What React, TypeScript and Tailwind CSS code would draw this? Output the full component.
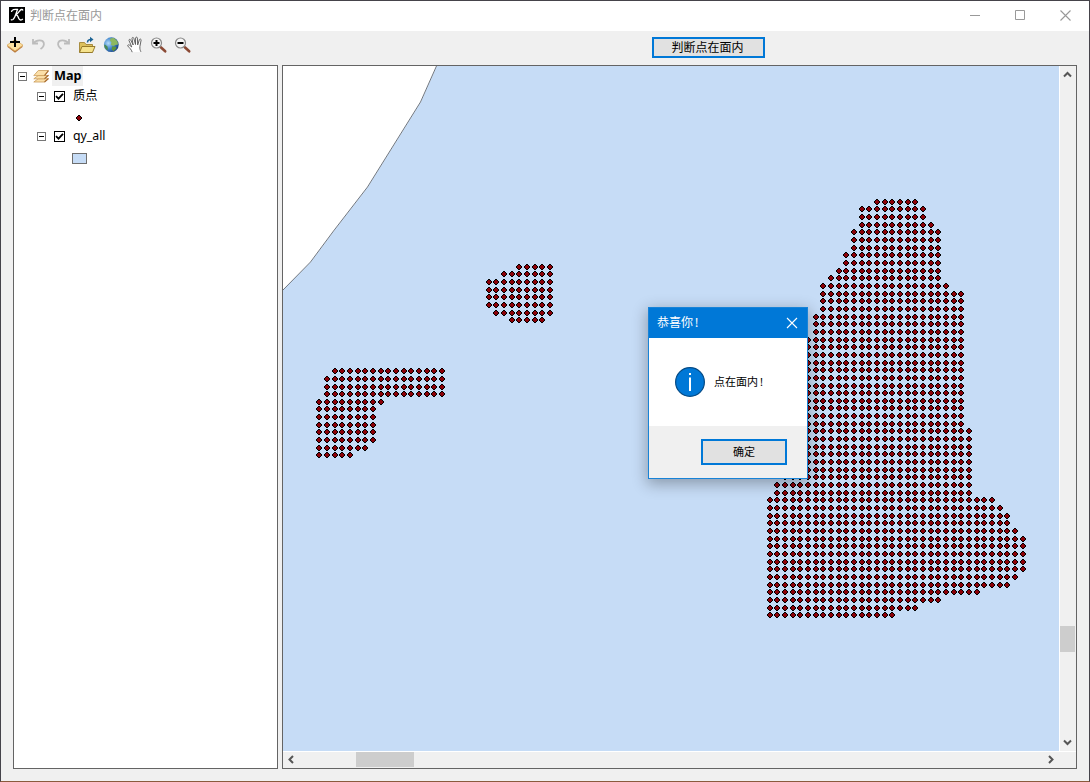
import type { ReactNode } from 'react';

type Span = [row: number, from: number, to: number];

const island: Span[] = [
  [0, 4, 8], [1, 2, 8], [2, 0, 8], [3, 0, 8], [4, 0, 8], [5, 0, 8], [6, 1, 8], [7, 3, 7],
];
const islandX = [489, 496, 504, 512, 519, 527, 535, 542, 550];
const islandY = [267, 274, 282, 290, 297, 305, 313, 320];

const hook: Span[] = [
  [0, 2, 16], [1, 1, 16], [2, 1, 16], [3, 1, 16], [4, 0, 8], [5, 0, 7], [6, 0, 7],
  [7, 0, 7], [8, 0, 7], [9, 0, 7], [10, 0, 6], [11, 0, 4],
];
const hookX = [319, 327, 335, 342, 350, 358, 365, 373, 381, 388, 396, 404, 411, 419, 427, 434, 442];
const hookY = [371, 379, 387, 394, 402, 409, 417, 425, 432, 440, 448, 455];

const starts = [14, 12, 12, 12, 11, 11, 11, 10, 10, 9, 8, 7, 7, 7, 7, 6, 6, 6];
const ends = [19, 20, 20, 21, 22, 22, 22, 22, 22, 22, 22, 23];
const lowerEnds = [29, 30, 31, 31, 32, 33, 33, 33, 33, 33, 32, 31, 27, 22, 19, 16];

const mainland: Span[] = Array.from({ length: 55 }, (_, j): Span => {
  const from = j < 18 ? starts[j] : j < 36 ? 5 : j === 36 ? 2 : j < 39 ? 1 : 0;
  const to = j < 12 ? ends[j] : j < 30 ? 25 : j < 39 ? 26 : lowerEnds[j - 39];
  return [j, from, to];
});

function points(spans: Span[], xAt: (k: number) => number, yAt: (j: number) => number) {
  return spans.flatMap(([j, from, to]) =>
    Array.from({ length: to - from + 1 }, (_, i) => [xAt(from + i), yAt(j)]),
  );
}

const allPoints = [
  ...points(island, (k) => islandX[k], (j) => islandY[j]),
  ...points(hook, (k) => hookX[k], (j) => hookY[j]),
  ...points(mainland, (k) => 770 + Math.floor((23 * k) / 3), (j) => 202 + Math.floor(7.66 * j + 0.17)),
];
const outline = allPoints
  .map(([x, y]) => `M${x - 1} ${y - 3}h2v1h1v1h1v2h-1v1h-1v1h-2v-1h-1v-1h-1v-2h1v-1h1z`)
  .join('');
const core = allPoints.map(([x, y]) => `M${x - 1} ${y - 2}h2v1h1v2h-1v1h-2v-1h-1v-2h1z`).join('');

function Icon({ children }: { children: ReactNode }) {
  return (
    <button className="flex h-6 w-6 shrink-0 items-center justify-center">
      <svg width="18" height="18" viewBox="0 0 18 18" fill="none">{children}</svg>
    </button>
  );
}

function Magnifier({ plus }: { plus?: boolean }) {
  return (
    <Icon>
      <path d="M10.800 11.300l4.400 4" stroke="#8b4a35" strokeWidth="2.600" strokeLinecap="round" />
      <circle cx="6.500" cy="7" r="5" fill="#f6f6f6" stroke="#8a8a8a" strokeWidth="1.200" />
      <path d="M3.500 7h6" stroke="#000" strokeWidth="2" />
      {plus && <path d="M6.500 4v6" stroke="#000" strokeWidth="2" />}
    </Icon>
  );
}

function Toolbar() {
  return (
    <div className="flex h-[34px] items-start pt-[2px]">
      <div className="flex w-[649px] pl-[2px]">
        <Icon>
          <path d="M1.500 9.500v1.500L9 16.800l7.500-5.800V9.500z" fill="#b9783a" />
          <path d="M1 9.200L8.500 4h1L17 9.200 9 15z" fill="#fce0a0" stroke="#dba95c" strokeWidth=".8" />
          <path d="M9 1v10M4 6h10" stroke="#000" strokeWidth="2" />
        </Icon>
        <Icon>
          <path d="M3 3v4.500h5" stroke="#bcbcbc" strokeWidth="1.800" />
          <path d="M3.500 7.200c3-3.700 9.500-4 10.300-.2.500 2.500-1 4.500-3.300 6" stroke="#bcbcbc" strokeWidth="1.800" />
        </Icon>
        <Icon>
          <path d="M15 3v4.500h-5" stroke="#bcbcbc" strokeWidth="1.800" />
          <path d="M14.500 7.200c-3-3.700-9.500-4-10.300-.2-.500 2.500 1 4.500 3.300 6" stroke="#bcbcbc" strokeWidth="1.800" />
        </Icon>
        <Icon>
          <path d="M1.500 16V6.500h5L8 8.500h6.500V16z" fill="#dcc05c" stroke="#a08434" strokeWidth=".9" />
          <path d="M1.500 16.500l2.500-6h13l-2.500 6z" fill="#f5e28c" stroke="#8d7020" strokeWidth=".9" />
          <path d="M9.500 6.500c0-2.300 1.200-3 3.500-3" stroke="#1e6494" strokeWidth="1.500" />
          <path d="M12 .8l3.500 2.700L12 6.200z" fill="#1e6494" />
        </Icon>
        <Icon>
          <defs>
            <radialGradient id="sea" cx=".3" cy=".4" r=".75">
              <stop offset="0" stopColor="#b5dcfa" />
              <stop offset=".5" stopColor="#4287cc" />
              <stop offset="1" stopColor="#173c7c" />
            </radialGradient>
          </defs>
          <circle cx="9.300" cy="8.700" r="7.400" fill="url(#sea)" />
          <path d="M8.500 2.300l3.500-.4 3.500 3.300.5 3.300-2.500.5-2 1-2.700-1.300.7-2.500-1.500-1.500z" fill="#8db860" />
          <path d="M10 10.500l4 .3.300 1.700-2.800 2.800-1.700-2z" fill="#5f933c" />
          <path d="M3 8.500l2.500 2 .5 3-1 .5C3 12.700 2.300 11 2.200 9z" fill="#4c8a53" />
        </Icon>
        <Icon>
          <path
            d="M6.200 16.200C5.500 13.500 3.500 12 1.800 10c-.5-1.200 1-1.600 2-.6l2 1.600L3 4.500c-.3-1.200 1.200-1.600 1.700-.5l2.500 5L6 2.500c0-1.300 1.500-1.400 1.800-.2L9.500 8.500l.1-6.500c.2-1.200 1.700-1.100 1.800.1l.3 6.800 1.700-5.300c.5-1 1.800-.6 1.700.5l-1.200 6.400c-.2 2.500.2 3.500 1 5.300"
            fill="#fff"
            stroke="#555"
            strokeWidth=".9"
          />
        </Icon>
        <Magnifier plus />
        <Magnifier />
      </div>
      <button className="mt-[4px] ml-[2px] flex h-[21px] w-[113px] items-center justify-center border-2 border-[#0078d7] bg-[#e1e1e1] pr-[2px] text-[12px] leading-none text-black">
        判断点在面内
      </button>
    </div>
  );
}

function Expander() {
  return (
    <span className="flex h-[9px] w-[9px] shrink-0 items-center justify-center border border-[#777] bg-white">
      <span className="h-px w-[5px] bg-black" />
    </span>
  );
}

function Layer({ name, children }: { name: string; children: ReactNode }) {
  return (
    <div>
      <div className="flex h-5 items-center pl-[23px]">
        <Expander />
        <span className="ml-[8px] flex h-[11px] w-[11px] items-center justify-center border border-black bg-white">
          <svg width="9" height="9" viewBox="0 0 9 9" fill="none">
            <path d="M1 4.200l2.500 2.500L8 1.800" stroke="#000" strokeWidth="1.800" />
          </svg>
        </span>
        <span className="ml-[8px] text-[12.300px] leading-5">{name}</span>
      </div>
      <div className="flex h-5 items-center pl-[58px]">{children}</div>
    </div>
  );
}

function LayerTree() {
  return (
    <div className="w-[265px] shrink-0 border border-[#646464] bg-white text-black">
      <div className="flex h-5 items-center pl-[4px]">
        <Expander />
        <svg className="ml-[6px]" width="17" height="14" viewBox="0 0 17 14" fill="#fbdfa8" stroke="#c99a58" strokeWidth=".8">
          <path d="M.8 13l4.500-3.300h10L11.500 13z" />
          <path d="M.8 9.800l4.500-3.300h10l-3.800 3.300z" />
          <path d="M.8 6.600L5.300 1.500h10l-3.800 5.100z" />
          <path d="M11.500 13l4-3.500M11.500 9.800l4-3.500M11.500 6.600l4-5" stroke="#a96d31" strokeWidth="1.200" />
        </svg>
        <span className="ml-[2px] h-5 w-[31px] bg-[#f0f0f0] pl-[2px] text-[12.700px] leading-[19px] font-bold">Map</span>
      </div>
      <Layer name="质点">
        <svg className="mt-[4px] ml-[4px]" width="6" height="6" shapeRendering="crispEdges">
          <path d="M2 0h2v1h1v1h1v2h-1v1h-1v1h-2v-1h-1v-1h-1v-2h1v-1h1z" fill="#000" />
          <path d="M2 1h2v1h1v2h-1v1h-2v-1h-1v-2h1z" fill="#8b0008" />
        </svg>
      </Layer>
      <Layer name="qy_all">
        <span className="mt-[5px] h-[11px] w-[15px] border border-[#6e6e6e] bg-[#c6dcf6]" />
      </Layer>
    </div>
  );
}

function Arrow({ d }: { d: string }) {
  return (
    <svg width="9" height="9" viewBox="0 0 9 9" fill="none" className="shrink-0">
      <path d={d} stroke="#555" strokeWidth="2" />
    </svg>
  );
}

function MapView() {
  return (
    <div className="w-[795px] shrink-0 border border-[#646464] bg-[#f0f0f0]">
      <div className="flex h-[685px]">
        <svg className="shrink-0 bg-[#c6dcf6]" width="776" height="685" viewBox="283 66 776 685">
          <path d="M283 66H437L421 102L368 187L334 231L311 262L283 290Z" fill="#fff" />
          <path d="M436.500 66L420.500 102L367.500 187L333.500 231L310.500 262L283 290" fill="none" stroke="#5f6670" strokeWidth=".9" />
          <g shapeRendering="crispEdges">
            <path d={outline} fill="#000" />
            <path d={core} fill="#8b0008" />
          </g>
        </svg>
        <div className="flex w-[17px] flex-col items-center border-l border-white pr-px">
          <div className="flex h-[17px] items-center"><Arrow d="M1 6.500l3.500-3.500 3.500 3.500" /></div>
          <div className="mt-[543px] h-[26px] w-[15px] bg-[#cdcdcd]" />
          <div className="mt-auto flex h-[17px] items-center"><Arrow d="M1 2.500l3.500 3.500 3.500-3.500" /></div>
        </div>
      </div>
      <div className="flex h-[17px] items-center border-t border-white pb-px">
        <div className="flex w-[17px] justify-center"><Arrow d="M6 1l-3.500 3.500 3.500 3.500" /></div>
        <div className="ml-[56px] h-[15px] w-[58px] bg-[#cdcdcd]" />
        <div className="mr-[17px] ml-auto flex w-[17px] justify-center"><Arrow d="M3 1l3.500 3.500-3.500 3.500" /></div>
      </div>
    </div>
  );
}

function MessageBox() {
  return (
    <div className="absolute top-[306px] left-[647px] flex h-[172px] w-[160px] flex-col border border-[#1883d7] bg-white text-black shadow-[0_4px_14px_1px_rgba(0,0,0,0.3)]">
      <div className="flex h-[30px] items-center justify-between bg-[#0078d7] pr-[9px] pl-[8px] text-[12px] text-white">
        <span>恭喜你<span className="ml-[2px]">!</span></span>
        <svg width="12" height="12" viewBox="0 0 12 12" stroke="#fff" strokeWidth="1.100">
          <path d="M1 1l10 10M11 1L1 11" />
        </svg>
      </div>
      <div className="flex h-[88px] items-center pl-[26px]">
        <svg width="30" height="30" viewBox="0 0 30 30">
          <circle cx="15" cy="15" r="14.400" fill="#0078d7" stroke="#064b85" strokeWidth="1.200" />
          <path d="M14 6h2v2h-2zM14 10.500h2V24h-2z" fill="#fff" />
        </svg>
        <span className="ml-[9px] text-[11px]">点在面内<span className="ml-[2px]">!</span></span>
      </div>
      <div className="flex flex-1 justify-end bg-[#f0f0f0] pt-[13px] pr-[20px]">
        <button className="flex h-[26px] w-[86px] items-center justify-center border-2 border-[#0078d7] bg-[#e1e1e1] pb-px text-[11px] leading-none">
          确定
        </button>
      </div>
    </div>
  );
}

export default function App() {
  return (
    <div className="relative flex h-[782px] w-[1090px] flex-col overflow-hidden border border-[#45434a] border-b-[#8a5a3c] bg-[#f0f0f0] font-['Noto_Sans','Noto_Sans_CJK_SC',sans-serif]">
      <header className="flex h-[30px] shrink-0 items-center bg-white pl-[8px]">
        <svg className="mb-[2px]" width="16" height="16" viewBox="0 0 16 16">
          <path d="M0 0h16v16H0z" fill="#000" />
          <path
            d="M2.500 5C2.500 2.500 5.500 2 8.500 2.500 7 6 6.500 10.500 4 12.500c-.8.500-1.600.4-2-.2M14 3.500c-.5-1.500-2-1.200-3 0C9.500 5.500 8.500 7.300 6.500 7.800c2.500-.3 2.700 2.200 3.300 3.800.7 2 3 1.700 4 .2"
            fill="none"
            stroke="#fff"
            strokeWidth="1.300"
          />
        </svg>
        <span className="ml-[5px] text-[12px] text-[#999]">判断点在面内</span>
        <div className="mb-[2px] ml-auto flex items-center gap-[35px] pr-[18px]">
          <svg width="10" height="11"><path d="M0 5.500h10" stroke="#999" /></svg>
          <svg width="10" height="10" fill="none"><path d="M.5.5h9v9h-9z" stroke="#999" /></svg>
          <svg width="11" height="11" fill="none"><path d="M.5.5l10 10M10.500.5l-10 10" stroke="#999" strokeWidth="1.100" /></svg>
        </div>
      </header>
      <Toolbar />
      <main className="flex h-[704px] shrink-0 gap-[4px] pl-[12px]">
        <LayerTree />
        <MapView />
      </main>
      <MessageBox />
    </div>
  );
}
